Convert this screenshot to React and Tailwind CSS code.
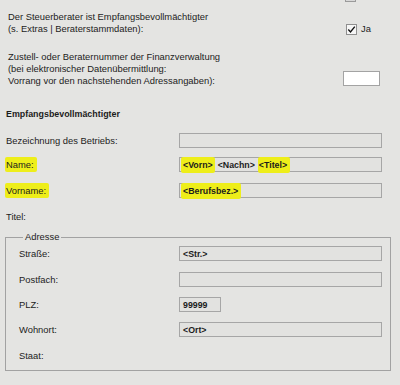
export default function App() {
  const font = { fontFamily: '"Liberation Sans", Arial, sans-serif' }
  return (
    <div
      className="w-[400px] h-[385px] overflow-hidden bg-[#e4e4e2] text-[#1c1c1c] text-[9.4px] leading-[12px]"
      style={font}
    >
      {/* clipped checkbox from the row above */}
      <div className="h-[11px] relative">
        <div className="absolute left-[345px] -top-[11px] w-[11px] h-[13px] border border-[#9a9a9a] bg-[#d8d8d8]" />
      </div>

      {/* Steuerberater row */}
      <div className="flex items-end pl-[8px]">
        <div className="w-[338px]">
          <div>Der Steuerberater ist Empfangsbevollmächtigter</div>
          <div>(s. Extras | Beraterstammdaten):</div>
        </div>
        <div className="flex items-center gap-[4px]">
          <div className="w-[11px] h-[11px] border border-[#8f8f8f] bg-[#f6f6f6] flex items-center justify-center">
            <svg width="9" height="9" viewBox="0 0 9 9" fill="none" stroke="#111" strokeWidth="1.4">
              <path d="M1.3 4.6 L3.5 6.9 L7.8 1.6" />
            </svg>
          </div>
          <span>Ja</span>
        </div>
      </div>

      {/* Zustell row */}
      <div className="flex items-end pl-[8px] mt-[16px]">
        <div className="w-[335px]">
          <div>Zustell- oder Beraternummer der Finanzverwaltung</div>
          <div>(bei elektronischer Datenübermittlung:</div>
          <div>Vorrang vor den nachstehenden Adressangaben):</div>
        </div>
        <div className="w-[37px] h-[15px] border border-[#a3a3a3] bg-white mb-[1px]" />
      </div>

      {/* Empfangsbevollmächtigter */}
      <div className="pl-[6px] mt-[21px] font-bold text-[8.9px]">Empfangsbevollmächtigter</div>

      <div className="mt-[13px] flex flex-col">
        <Row label="Bezeichnung des Betriebs:" />
        <Row
          className="mt-[9px]"
          label={<Mark className="-ml-[1px] pl-[1px] pr-[3px]">Name:</Mark>}
          value={
            <>
              <Mark className="-ml-[2px] pl-[2px] pr-[2px]">&lt;Vorn&gt;</Mark>
              <span className="ml-[3px]">&lt;Nachn&gt;</span>
              <Mark className="ml-[3px] pl-[1px] pr-[3px]">&lt;Titel&gt;</Mark>
            </>
          }
        />
        <Row
          className="mt-[11px]"
          label={<Mark className="-ml-[1px] pl-[1px] pr-[3px]">Vorname:</Mark>}
          value={<Mark className="-ml-[2px] pl-[2px] pr-[3px]">&lt;Berufsbez.&gt;</Mark>}
        />
        <Row className="mt-[11px]" label="Titel:" noBox />
      </div>

      {/* Adresse group */}
      <fieldset className="mx-[5px] w-[386px] mt-[7px] border border-[#a2a2a2] pl-[13px] pb-[8px] h-[140px]">
        <legend className="px-[2px] ml-[4px] leading-[12px]">Adresse</legend>
        <div className="flex flex-col mt-[3px]">
          <Row inner label="Straße:" value="<Str.>" />
          <Row inner className="mt-[11px]" label="Postfach:" />
          <Row inner className="mt-[10px]" label="PLZ:" value="99999" boxW="w-[42px]" />
          <Row inner className="mt-[10px]" label="Wohnort:" value="<Ort>" />
          <Row inner className="mt-[11px]" label="Staat:" noBox />
        </div>
      </fieldset>
    </div>
  )
}

function Mark({ children, className = '' }) {
  return <span className={`bg-[#eeee1a] rounded-[2px] py-[2px] ${className}`}>{children}</span>
}

function Row({ label, value, noBox, inner, boxW = 'w-[203px]', className = '' }) {
  return (
    <div className={`flex items-center h-[15px] ${inner ? '' : 'pl-[6px]'} ${className}`}>
      <div className={inner ? 'w-[160px]' : 'w-[173px]'}>{label}</div>
      {!noBox && (
        <div
          className={`${boxW} h-[15px] border border-[#a6a6a6] bg-[#e2e2e0] flex items-center pl-[3px] font-bold text-[8.8px] whitespace-nowrap`}
        >
          {value}
        </div>
      )}
    </div>
  )
}
